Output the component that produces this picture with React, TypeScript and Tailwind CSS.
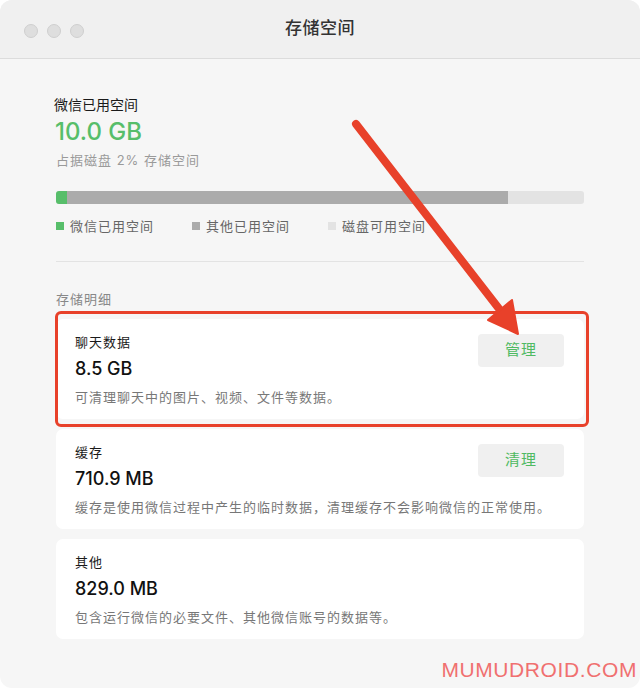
import React from "react";

type StorageItem = {
	title: string;
	size: string;
	note: string;
	action?: string;
	highlight?: boolean;
};

const items: StorageItem[] = [
	{
		title: "聊天数据",
		size: "8.5 GB",
		note: "可清理聊天中的图片、视频、文件等数据。",
		action: "管理",
		highlight: true,
	},
	{
		title: "缓存",
		size: "710.9 MB",
		note: "缓存是使用微信过程中产生的临时数据，清理缓存不会影响微信的正常使用。",
		action: "清理",
	},
	{
		title: "其他",
		size: "829.0 MB",
		note: "包含运行微信的必要文件、其他微信账号的数据等。",
	},
];

const font = {
	fontFamily: '"Inter", "Noto Sans CJK SC", "Noto Sans", sans-serif',
};

function TrafficLights() {
	return (
		<div className="absolute left-[24px] top-[24px] flex gap-[9px]">
			<span className="h-[14px] w-[14px] rounded-full border border-[#cfcfcf] bg-[#dedede]" />
			<span className="h-[14px] w-[14px] rounded-full border border-[#cfcfcf] bg-[#dedede]" />
			<span className="h-[14px] w-[14px] rounded-full border border-[#cfcfcf] bg-[#dedede]" />
		</div>
	);
}

function LegendItem({ color, label }: { color: string; label: string }) {
	return (
		<div className="flex w-[136px] items-center gap-[6px]">
			<span className={`h-[8px] w-[8px] ${color}`} />
			<span className="text-[13px] leading-[18px] tracking-[1px] text-[#666]">{label}</span>
		</div>
	);
}

function StorageCard({ item }: { item: StorageItem }) {
	return (
		<div className="relative grid grid-cols-[1fr_auto] rounded-[7px] bg-white pb-[13px] pl-[19px] pr-[20px] pt-[14px]">
			<span className="text-[13px] leading-[18px] tracking-[1px] text-[#1a1a1a]">{item.title}</span>
			{item.action ? (
				<button className="row-span-2 mt-[1px] h-[33px] w-[86px] rounded-[4px] bg-[#f0f0f0] text-[15px] tracking-[1px] text-[#4fba62]">
					{item.action}
				</button>
			) : (
				<span className="row-span-2" />
			)}
			<span className="mt-[6px] text-[18px] font-medium leading-[24px] text-[#111]">{item.size}</span>
			<span className="col-span-2 mt-[7px] text-[13px] leading-[18px] tracking-[1px] text-[#777]">{item.note}</span>
			{item.highlight ? (
				<div className="pointer-events-none absolute -bottom-[8px] -left-[1px] -right-[5px] -top-[8px] rounded-[6px] border-[3px] border-[#e8412a]" />
			) : null}
		</div>
	);
}

export default function App() {
	return (
		<div className="relative h-[689px] w-[640px] bg-white" style={font}>
			<div className="flex h-[688px] flex-col overflow-hidden rounded-[12px] bg-[#f6f6f6]">
				<div className="relative flex h-[59px] shrink-0 items-center justify-center border-b border-[#dcdcdc] bg-[#f0f0f0]">
					<TrafficLights />
					<span className="text-[17px] font-medium tracking-[0.5px] text-[#333]">存储空间</span>
				</div>

				<div className="flex flex-col px-[56px] pt-[36px]">
					<span className="-ml-[2px] text-[14px] leading-[20px] text-[#1a1a1a]">微信已用空间</span>
					<span className="-ml-[1px] mt-[2px] text-[24px] font-medium leading-[30px] text-[#57be6a]">10.0 GB</span>
					<span className="mt-[4px] text-[13px] leading-[18px] tracking-[1px] text-[#9a9a9a]">占据磁盘 2% 存储空间</span>

					<div className="mt-[22px] flex h-[13px] overflow-hidden rounded-[3px] bg-[#e3e3e3]">
						<div className="w-[11px] bg-[#57be6a]" />
						<div className="w-[441px] bg-[#ababab]" />
					</div>

					<div className="mt-[13px] flex">
						<LegendItem color="bg-[#57be6a]" label="微信已用空间" />
						<LegendItem color="bg-[#ababab]" label="其他已用空间" />
						<LegendItem color="bg-[#e3e3e3]" label="磁盘可用空间" />
					</div>

					<div className="mt-[26px] h-px bg-[#e3e3e3]" />

					<span className="mt-[28px] text-[13px] leading-[18px] tracking-[1px] text-[#888]">存储明细</span>

					<div className="mt-[11px] flex flex-col gap-[10px]">
						{items.map((item) => (
							<StorageCard key={item.title} item={item} />
						))}
					</div>
				</div>
			</div>

			<svg className="pointer-events-none absolute left-0 top-0" width="640" height="689" viewBox="0 0 640 689">
				<line x1="356" y1="124" x2="500" y2="310" stroke="#e8412a" strokeWidth="8" strokeLinecap="round" />
				<polygon points="488,320 512,300 518,334" fill="#e8412a" stroke="#e8412a" strokeWidth="2" strokeLinejoin="round" />
			</svg>

			<span
				className="absolute right-[3px] top-[657px] text-[21px] leading-[26px] tracking-[0.6px] text-[#f07070]"
				style={{ fontFamily: '"Liberation Sans", Arial, sans-serif' }}
			>
				MUMUDROID.COM
			</span>
		</div>
	);
}
